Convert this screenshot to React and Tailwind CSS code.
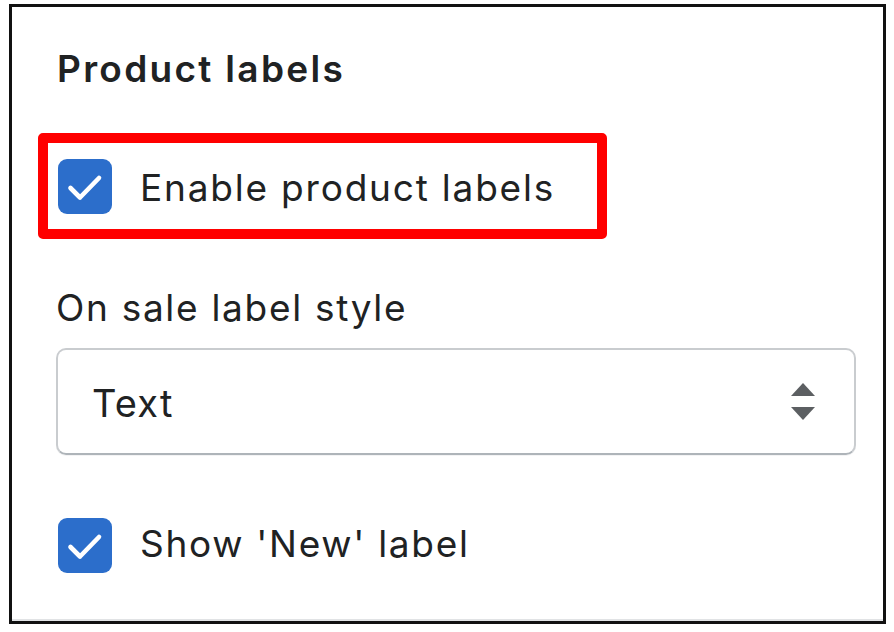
import React from "react";

function Check() {
  return (
    <div className="w-[54px] h-[55px] rounded-[9px] bg-[#2c6ecb] flex items-center justify-center shrink-0">
      <svg width="54" height="55" viewBox="0 0 54 55">
        <path d="M12.5 29 L22 38.5 L41 19" fill="none" stroke="#fff" strokeWidth="4.6" strokeLinecap="round" strokeLinejoin="round" />
      </svg>
    </div>
  );
}

export default function App() {
  return (
    <div className="relative w-[894px] h-[632px] bg-white pt-[4px] pl-[9px] font-['Inter',sans-serif] text-[#202223]">
      <div className="w-[877px] h-[620px] border-[3px] border-[#111] flex flex-col">
        <div className="flex-1 flex flex-col pl-[44px] pt-[38px]">
          <div className="h-[48px] leading-[48px] text-[37px] font-semibold tracking-[2.3px] ml-[1px] whitespace-nowrap">Product labels</div>
          <div className="-ml-[18px] mt-[40px] w-[569px] h-[106px] border-[10px] border-[#ff0000] rounded-[5px] flex items-center pl-[10px]">
            <Check />
            <div className="ml-[28px] h-[48px] leading-[48px] text-[37px] tracking-[1.8px] translate-y-[2px] whitespace-nowrap">Enable product labels</div>
          </div>
          <div className="mt-[45px] h-[48px] leading-[48px] text-[37px] tracking-[1.7px] whitespace-nowrap">On sale label style</div>
          <div className="mt-[16px] w-[800px] h-[107px] rounded-[10px] border-2 border-[#c9cccf] border-b-[#aeb4b9] shadow-[0_1px_0_rgba(22,29,37,0.05)] flex items-center justify-between pl-[34px] pr-[39px]">
            <div className="h-[48px] leading-[48px] text-[38px] tracking-[1.2px] translate-y-[1px]">Text</div>
            <svg width="24" height="37" viewBox="0 0 24 37">
              <path d="M0 13 L12 0 L24 13 Z" fill="#5c5f62" />
              <path d="M0 24 L24 24 L12 37 Z" fill="#5c5f62" />
            </svg>
          </div>
          <div className="mt-[63px] flex items-center ml-[2px]">
            <Check />
            <div className="ml-[28px] h-[48px] leading-[48px] text-[37px] tracking-[1.7px] -translate-y-[2px] whitespace-nowrap">Show 'New' label</div>
          </div>
        </div>
        <div className="h-[2px] bg-[#e1e3e5]" />
      </div>
    </div>
  );
}
